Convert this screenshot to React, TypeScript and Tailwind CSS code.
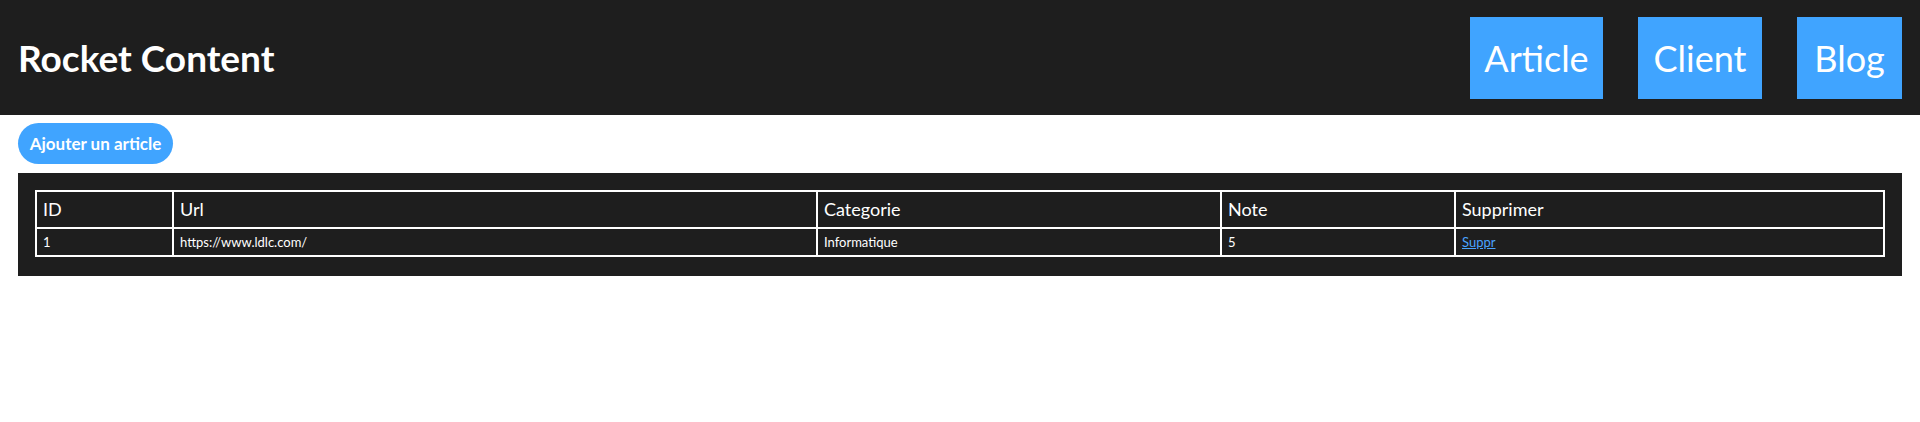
const articles = [{ id: 1, url: 'https://www.ldlc.com/', categorie: 'Informatique', note: 5 }]

const navLinks = [
  { name: 'Article', width: 'w-[133px]' },
  { name: 'Client', width: 'w-[124px]' },
  { name: 'Blog', width: 'w-[105px]' },
]

const App = () => {
  return (
    <div className="min-h-[422px] bg-white font-['Segoe_UI','Lato',sans-serif]">
      <header className="flex h-[115px] items-center justify-between bg-[#1e1e1e] px-[18px]">
        <h1 className="text-[37px] font-bold leading-none text-white">Rocket Content</h1>
        <nav className="flex gap-[35px]">
          {navLinks.map((l) => (
            <a
              key={l.name}
              href="#"
              className={`flex h-[82px] items-center justify-center bg-[#40a4ff] text-[36px] leading-none text-white ${l.width}`}
            >
              {l.name}
            </a>
          ))}
        </nav>
      </header>

      <main className="px-[18px] pt-2">
        <button
          type="button"
          className="mb-[9px] h-[41px] w-[155px] rounded-full bg-[#40a4ff] text-[17px] font-bold text-white"
        >
          Ajouter un article
        </button>

        <div className="bg-[#1e1e1e] px-[17px] pb-[19px] pt-[17px]">
          <table className="w-full table-fixed border-collapse border-2 border-white text-left text-white">
            <colgroup>
              <col className="w-[137px]" />
              <col className="w-[644px]" />
              <col className="w-[404px]" />
              <col className="w-[234px]" />
              <col />
            </colgroup>
            <thead>
              <tr>
                <th className="border-2 border-white px-[6px] py-[4px] text-[18px] font-normal leading-[27px]">ID</th>
                <th className="border-2 border-white px-[6px] py-[4px] text-[18px] font-normal leading-[27px]">Url</th>
                <th className="border-2 border-white px-[6px] py-[4px] text-[18px] font-normal leading-[27px]">Categorie</th>
                <th className="border-2 border-white px-[6px] py-[4px] text-[18px] font-normal leading-[27px]">Note</th>
                <th className="border-2 border-white px-[6px] py-[4px] text-[18px] font-normal leading-[27px]">Supprimer</th>
              </tr>
            </thead>
            <tbody>
              {articles.map((a) => (
                <tr key={a.id}>
                  <td className="border-2 border-white px-[6px] py-[4px] text-[13px] leading-[18px]">{a.id}</td>
                  <td className="border-2 border-white px-[6px] py-[4px] text-[13px] leading-[18px]">{a.url}</td>
                  <td className="border-2 border-white px-[6px] py-[4px] text-[13px] leading-[18px]">{a.categorie}</td>
                  <td className="border-2 border-white px-[6px] py-[4px] text-[13px] leading-[18px]">{a.note}</td>
                  <td className="border-2 border-white px-[6px] py-[4px] text-[13px] leading-[18px]">
                    <a href="#" className="text-[#4aa3ff] underline">
                      Suppr
                    </a>
                  </td>
                </tr>
              ))}
            </tbody>
          </table>
        </div>
      </main>
    </div>
  )
}

export default App
